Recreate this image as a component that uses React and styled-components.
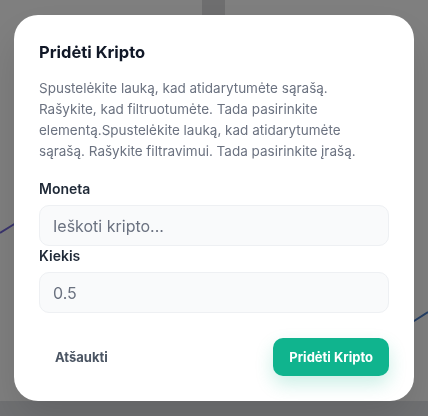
import React from 'react';
import styled, { createGlobalStyle } from 'styled-components';

const GlobalStyle = createGlobalStyle`
  * {
    box-sizing: border-box;
  }

  body {
    margin: 0;
    font-family: 'Inter', 'Noto Sans', sans-serif;
    background: #ffffff;
  }
`;

const App = () => {
  return (
    <>
      <GlobalStyle />
      <Page>
        <TopBar>
          <TopCell />
          <TopDivider />
          <TopCell />
        </TopBar>
        <ChartArea>
          <svg width="428" height="386" viewBox="0 0 428 386" preserveAspectRatio="none">
            <defs>
              <linearGradient id="line" x1="0" x2="1" y1="0" y2="0">
                <stop offset="0" stopColor="#7468dc" />
                <stop offset="1" stopColor="#4a80cc" />
              </linearGradient>
            </defs>
            <polyline
              points="0,218 16,208 120,250 260,270 414,306 428,297"
              fill="none"
              stroke="url(#line)"
              strokeWidth="2"
            />
          </svg>
        </ChartArea>
        <Footer />
      </Page>

      <Overlay>
        <Dialog>
          <Title>Pridėti Kripto</Title>
          <Description>
            Spustelėkite lauką, kad atidarytumėte sąrašą. Rašykite, kad filtruotumėte. Tada pasirinkite
            elementą.Spustelėkite lauką, kad atidarytumėte sąrašą. Rašykite filtravimui. Tada pasirinkite įrašą.
          </Description>

          <Form>
            <Label htmlFor="coin">Moneta</Label>
            <Input id="coin" placeholder="Ieškoti kripto..." />
            <Label htmlFor="amount">Kiekis</Label>
            <Input id="amount" placeholder="0.5" />
          </Form>

          <Actions>
            <GhostButton>Atšaukti</GhostButton>
            <PrimaryButton>Pridėti Kripto</PrimaryButton>
          </Actions>
        </Dialog>
      </Overlay>
    </>
  );
};

export default App;

const Page = styled.div`
  display: flex;
  flex-direction: column;
  height: 416px;
  overflow: hidden;
  background: #ffffff;
`;

const TopBar = styled.div`
  display: grid;
  grid-template-columns: 202px 23px 1fr;
  height: 15px;
  flex-shrink: 0;
`;

const TopCell = styled.div`
  background: #ffffff;
`;

const TopDivider = styled.div`
  background: #dcdcdf;
`;

const ChartArea = styled.div`
  flex: 1;
  display: flex;

  svg {
    display: block;
  }
`;

const Footer = styled.div`
  height: 15px;
  flex-shrink: 0;
  background: #e1e3e7;
`;

const Overlay = styled.div`
  position: fixed;
  inset: 0;
  display: flex;
  align-items: center;
  justify-content: center;
  background: rgba(0, 0, 0, 0.5);
`;

const Dialog = styled.div`
  width: 400px;
  padding: 25px 25px 25px;
  background: #ffffff;
  border-radius: 24px;
  box-shadow: 0 20px 40px rgba(0, 0, 0, 0.12);
`;

const Title = styled.h2`
  margin: 0;
  font-size: 16.5px;
  line-height: 24px;
  font-weight: 700;
  color: #111827;
`;

const Description = styled.p`
  margin: 14px 0 0;
  font-size: 13.5px;
  line-height: 21px;
  color: #6b7280;
`;

const Form = styled.div`
  display: flex;
  flex-direction: column;
  margin-top: 17px;
`;

const Label = styled.label`
  font-size: 14px;
  line-height: 20px;
  font-weight: 600;
  color: #1f2937;
  margin-bottom: 6px;
`;

const Input = styled.input`
  height: 41px;
  padding: 0 13px;
  font-family: inherit;
  font-size: 16px;
  color: #111827;
  background: #f9fafb;
  border: 1px solid #eef0f3;
  border-radius: 10px;
  outline: none;

  &::placeholder {
    color: #6b7280;
  }
`;

const Actions = styled.div`
  display: flex;
  justify-content: space-between;
  align-items: center;
  margin-top: 25px;
`;

const GhostButton = styled.button`
  height: 38px;
  padding: 0 16px;
  font-family: inherit;
  font-size: 13px;
  font-weight: 700;
  color: #4b5563;
  background: transparent;
  border: none;
  cursor: pointer;
`;

const PrimaryButton = styled.button`
  height: 38px;
  padding: 0 16px;
  font-family: inherit;
  font-size: 13px;
  font-weight: 700;
  color: #ffffff;
  background: #10b48e;
  border: none;
  border-radius: 10px;
  box-shadow: 0 8px 18px rgba(16, 180, 142, 0.22);
  cursor: pointer;
`;
